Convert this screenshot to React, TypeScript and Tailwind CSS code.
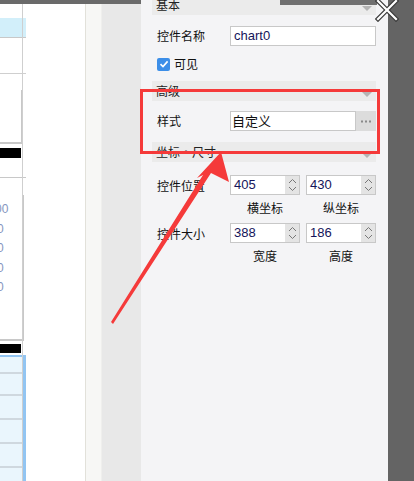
// App.tsx
import React from 'react';

const cn = '"Noto Sans CJK SC", "Liberation Sans", sans-serif';

// 分组标题行
function SectionHeader({ title, className = '' }: { title: string; className?: string }) {
  return (
    <div className={`relative flex h-[20px] items-center bg-[#ebebeb] pl-[4px] text-[12px] text-[#222] ${className}`}>
      <span>{title}</span>
      <span className="absolute right-[4px] top-[11px] h-0 w-0 border-x-[5px] border-t-[5px] border-x-transparent border-t-[#b4b4b4]" />
    </div>
  );
}

// 数字输入框（带上下箭头）
function SpinBox({ value, label }: { value: string; label: string }) {
  return (
    <div className="flex w-[70px] flex-col items-center">
      <div className="flex h-[20px] w-[70px] border border-[#c8c8c8] bg-white">
        <div className="flex flex-1 items-center pl-[3px] text-[13px] text-[#14145a]" style={{ fontFamily: '"Liberation Sans", Arial, sans-serif' }}>
          {value}
        </div>
        <div className="flex w-[14px] flex-col items-center justify-center bg-[#e4e4e4]">
          <svg width="9" height="16" viewBox="0 0 9 16" fill="none" stroke="#777" strokeWidth="1">
            <path d="M1 6 L4.5 2.5 L8 6" />
            <path d="M1 10 L4.5 13.5 L8 10" />
          </svg>
        </div>
      </div>
      <div className="mt-[6px] text-[12px] leading-[14px] text-[#111]">{label}</div>
    </div>
  );
}

// 左侧残留的面板片段
function LeftStrip() {
  return (
    <div className="relative flex w-[26px] flex-col bg-white">
      <div className="h-[18px]" />
      <div className="h-[20px] border-b border-[#c8c8c8] bg-[#d2effa]" />
      <div className="h-[36px] border-b border-[#cfcfcf]" />
      <div className="h-[16px]" />
      <div className="h-[54px] w-[23px] border-b-2 border-r-2 border-[#c8c8c8]" />
      <div className="h-[4px]" />
      <div className="h-[10px] w-[21px] bg-black" />
      <div className="h-[20px] border-b border-[#c8c8c8]" />
      <div className="h-[17px]" />
      <div className="flex h-[146px] w-[24px] flex-col border-r-2 border-b-2 border-[#c8c8c8] pt-[5px] text-[12px] leading-[19.5px] text-[#8496c0]" style={{ fontFamily: '"Liberation Sans", Arial, sans-serif' }}>
        <span className="-ml-[5px]">00</span>
        <span className="-ml-[3px]">0</span>
        <span className="-ml-[3px]">0</span>
        <span className="-ml-[3px]">0</span>
        <span className="-ml-[3px]">0</span>
      </div>
      <div className="h-[3px]" />
      <div className="h-[9px] w-[21px] bg-black" />
      <div className="h-[2px]" />
      <div className="flex flex-1 flex-col border-r-[3px] border-t-2 border-[#92c5f2] bg-[#eaf6fd]">
        <div className="h-[17px] border-b-2 border-[#cfd8df]" />
        <div className="h-[22px] border-b-2 border-[#cfd8df]" />
        <div className="h-[24px] border-b-2 border-[#cfd8df]" />
        <div className="h-[24px] border-b-2 border-[#cfd8df]" />
        <div className="h-[24px] border-b-2 border-[#cfd8df]" />
      </div>
      <div className="absolute right-[3px] top-0 h-full w-px bg-[#cfcfcf]" />
    </div>
  );
}

export default function App() {
  return (
    <div className="relative flex h-[481px] w-[414px] overflow-hidden bg-white" style={{ fontFamily: cn }}>
      <LeftStrip />
      <div className="w-[59px] bg-white" />
      <div className="w-[16px] border-l border-[#e2e1da] bg-[#f7f7f5]" />
      <div className="w-[40px] border-l border-[#efefed] bg-[#e8e8e8]" />

      {/* 属性面板 */}
      <div className="flex w-[247px] flex-col bg-[#f4f4f6] pl-[11px] pr-[12px]">
        <SectionHeader title="基本" className="-mt-[5px]" />

        <div className="mt-[11px] flex h-[20px] items-center">
          <span className="w-[78px] pl-[5px] text-[12px] text-[#111]">控件名称</span>
          <div className="flex h-[20px] flex-1 items-center border border-[#c8c8c8] bg-white pl-[3px] text-[13px] text-[#14145a]" style={{ fontFamily: '"Liberation Sans", Arial, sans-serif' }}>
            chart0
          </div>
        </div>

        <div className="mt-[11px] flex h-[14px] items-center pl-[5px]">
          <span className="flex h-[13px] w-[13px] items-center justify-center rounded-[2px] bg-[#3c8ee8]">
            <svg width="10" height="10" viewBox="0 0 10 10" fill="none" stroke="white" strokeWidth="1.6">
              <path d="M1.5 5.2 L4 7.6 L8.6 2.4" />
            </svg>
          </span>
          <span className="ml-[4px] text-[12px] text-[#111]">可见</span>
        </div>

        <SectionHeader title="高级" className="mt-[10px]" />

        <div className="mt-[10px] flex h-[20px] items-center">
          <span className="w-[78px] pl-[5px] text-[12px] text-[#111]">样式</span>
          <div className="flex h-[20px] flex-1 items-center border border-[#c8c8c8] bg-white pl-[1px] text-[13px] text-[#111]">
            自定义
          </div>
          <div className="flex h-[20px] w-[20px] items-center justify-center bg-[#dcdcdc]">
            <svg width="12" height="3" viewBox="0 0 12 3" fill="#8a8a8a">
              <rect x="1" y="0.5" width="2" height="2" />
              <rect x="5" y="0.5" width="2" height="2" />
              <rect x="9" y="0.5" width="2" height="2" />
            </svg>
          </div>
        </div>

        <SectionHeader title="坐标・尺寸" className="mt-[11px]" />

        <div className="mt-[13px] flex items-start">
          <span className="mt-[2px] w-[78px] pl-[5px] text-[12px] text-[#111]">控件位置</span>
          <div className="flex gap-[6px]">
            <SpinBox value="405" label="横坐标" />
            <SpinBox value="430" label="纵坐标" />
          </div>
        </div>

        <div className="mt-[8px] flex items-start">
          <span className="mt-[2px] w-[78px] pl-[5px] text-[12px] text-[#111]">控件大小</span>
          <div className="flex gap-[6px]">
            <SpinBox value="388" label="宽度" />
            <SpinBox value="186" label="高度" />
          </div>
        </div>
      </div>

      <div className="flex-1 bg-[#646464]" />

      {/* 顶部窗口条 */}
      <div className="absolute left-0 top-0 h-[4px] w-[141px] bg-[#6a6a6a]" />
      <div className="absolute left-[280px] top-0 h-[5px] w-[97px] bg-[#707070]" />

      {/* 关闭按钮 */}
      <svg className="absolute left-[375px] top-[-2px]" width="24" height="24" viewBox="0 0 24 24" fill="none" strokeLinecap="square">
        <path d="M3 3 L21 21 M21 3 L3 21" stroke="#3a3a3a" strokeWidth="4.5" />
        <path d="M3 3 L21 21 M21 3 L3 21" stroke="white" strokeWidth="2.2" />
      </svg>

      {/* 红色标注框 */}
      <div className="pointer-events-none absolute left-[140px] top-[89px] h-[65px] w-[240px] border-[3px] border-[#f53a3a]" />

      {/* 红色箭头 */}
      <svg className="pointer-events-none absolute left-0 top-0" width="414" height="481" viewBox="0 0 414 481">
        <polygon points="112,323 111,322 203,175 197,178 221,152 229,182 211,173 113,324" fill="#f53a3a" />
      </svg>
    </div>
  );
}
